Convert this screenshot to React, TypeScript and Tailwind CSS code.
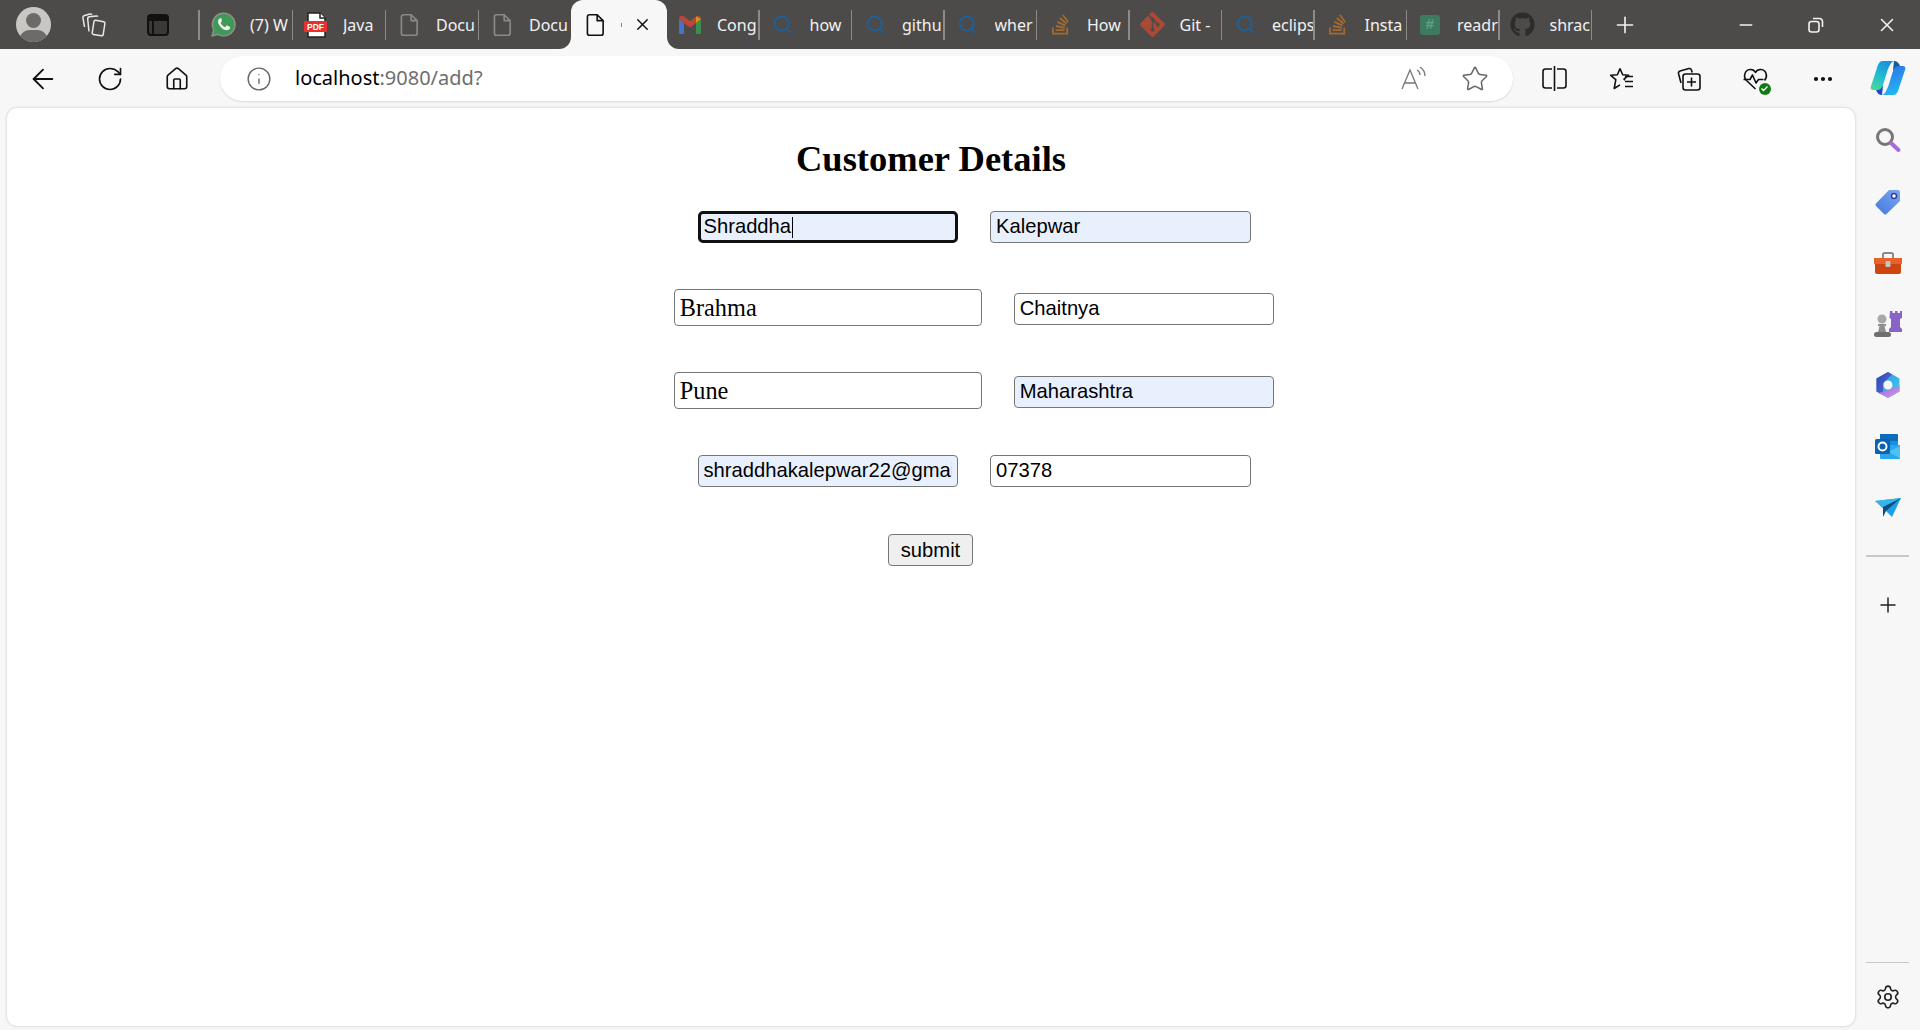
import React from "react";
import { FaStackOverflow, FaGithub } from "react-icons/fa";
import { SiGit } from "react-icons/si";
import { ArrowLeft, RotateCw, Home, Info, Star, Plus, X, Minus, Search, Settings, Ellipsis } from "lucide-react";

const FileIcon = ({ color, size = 24 }: { color: string; size?: number }) => (
  <svg width={size} height={size} viewBox="0 0 24 24" fill="none" stroke={color} strokeWidth="1.5" strokeLinejoin="round">
    <path d="M7 2.5h7l5.5 5.5v11.5a2 2 0 0 1-2 2H7a2 2 0 0 1-2-2v-15a2 2 0 0 1 2-2Z" />
    <path d="M14 2.5V8h5.5" />
  </svg>
);

const PdfIcon = () => (
  <svg width="26" height="26" viewBox="0 0 26 26">
    <path d="M5 1h12l5 5v19H5Z" fill="#fff" stroke="#222" strokeWidth="1.5" />
    <path d="M17 1v5h5" fill="#fff" stroke="#222" strokeWidth="1.5" />
    <rect x="1" y="9" width="23" height="11" fill="#e5322d" />
    <text x="12.5" y="18" textAnchor="middle" fontSize="8.5" fontWeight="700" fill="#fff" fontFamily="Liberation Sans, sans-serif">PDF</text>
  </svg>
);

const WhatsApp = () => (
  <svg width="25" height="25" viewBox="0 0 25 25">
    <path d="M1 24l1.700-6.200A11.300 11.300 0 1 1 7 22.300Z" fill="#3f9a58" stroke="#8a918b" strokeWidth="1.500" strokeLinejoin="round" />
    <path d="M8.800 6.500c-.8.300-1.800 1.500-1.800 3 0 3.500 4.800 8.800 8.800 8.800 1.500 0 2.900-1 3.200-2 .2-.6.200-1.200.1-1.400l-2.900-1.500c-.3-.1-.5 0-.7.200l-1 1.300c-.2.200-.4.200-.7.100-1.700-.7-3.100-2-4-3.800-.1-.3-.1-.5.100-.7l.8-1c.2-.2.200-.4.100-.7L10.500 6.600c-.3-.5-1-.3-1.700-.1Z" fill="#f0f0f0" />
  </svg>
);

const GmailIcon = () => (
  <svg width="24" height="24" viewBox="0 0 24 24" opacity="0.72">
    <path d="M1 6v14a1 1 0 0 0 1 1h4V10Z" fill="#4285f4" />
    <path d="M23 6v14a1 1 0 0 1-1 1h-4V10Z" fill="#34a853" />
    <path d="M1 6c0-3 3-4 5-2.5L12 8l6-4.500C20 2 23 3 23 6l-5 4-6 4.500L6 10Z" fill="#ea4335" />
    <path d="M18 3.500 23 6l-5 4Z" fill="#fbbc04" />
  </svg>
);

const HashIcon = () => (
  <div className="w-[20px] h-[20px] rounded-[3px] bg-[#3d7a5f] flex items-center justify-center text-[#5ea584] text-[15px] font-bold font-['Liberation_Sans',sans-serif]">#</div>
);

const searchIcon = <Search size={21} color="#225e92" strokeWidth={2.4} />;

const tabs: { icon: React.ReactNode; label: string }[] = [
  { icon: <WhatsApp />, label: "(7) W" },
  { icon: <PdfIcon />, label: "Java" },
  { icon: <FileIcon color="#8a8a88" size={26} />, label: "Docu" },
  { icon: <FileIcon color="#8a8a88" size={26} />, label: "Docu" },
  { icon: null, label: "" },
  { icon: <GmailIcon />, label: "Cong" },
  { icon: searchIcon, label: "how" },
  { icon: searchIcon, label: "githu" },
  { icon: searchIcon, label: "wher" },
  { icon: <FaStackOverflow size={23} color="#a5682f" />, label: "How" },
  { icon: <SiGit size={25} color="#a84a35" />, label: "Git -" },
  { icon: searchIcon, label: "eclips" },
  { icon: <FaStackOverflow size={23} color="#a5682f" />, label: "Insta" },
  { icon: <HashIcon />, label: "readr" },
  { icon: <FaGithub size={25} color="#2c2c2c" />, label: "shrac" },
];

const Tab = ({ icon, label, after }: { icon: React.ReactNode; label: string; after: boolean }) => (
  <div className={`relative ${after ? "w-[92.5px]" : "w-[93px]"} h-[49px] shrink-0 flex items-center`}>
    <div className="w-[44px] ml-[1px] flex justify-center shrink-0">{icon}</div>
    <div className="ml-[5px] w-[42px] overflow-hidden whitespace-nowrap text-[16px] text-[#f2f2f2] font-['Noto_Sans',sans-serif]">{label}</div>
    <div className="absolute right-0 top-[10px] h-[30px] w-[1.5px] bg-[#8c8b89]" />
  </div>
);

const ActiveTab = () => (
  <div className="relative w-[96px] h-[49px] shrink-0 bg-[#f7f7f7] rounded-t-[12px] flex items-center -ml-[1px]">
    <div className="absolute -left-[12px] bottom-0 w-[12px] h-[12px] bg-[#f7f7f7]">
      <div className="w-full h-full bg-[#4d4b49] rounded-br-[12px]" />
    </div>
    <div className="absolute -right-[12px] bottom-0 w-[12px] h-[12px] bg-[#f7f7f7] z-10">
      <div className="w-full h-full bg-[#4d4b49] rounded-bl-[12px]" />
    </div>
    <div className="ml-[11px]"><FileIcon color="#111" size={26} /></div>
    <div className="ml-[13px] w-[1px] h-[4px] bg-[#888]" />
    <X size={19} color="#111" strokeWidth={1.8} className="ml-[11px]" />
  </div>
);

const Split = () => (
  <svg width="27" height="27" viewBox="0 0 27 27" fill="none" stroke="#111" strokeWidth="1.6">
    <path d="M11 4H4.500a2.500 2.500 0 0 0-2.500 2.500v14a2.500 2.500 0 0 0 2.500 2.500H11M16 4h6.500a2.500 2.500 0 0 1 2.500 2.500v14a2.500 2.500 0 0 1-2.500 2.500H16M13.500 1v25" />
  </svg>
);
const FavList = () => (
  <svg width="28" height="28" viewBox="0 0 28 28" fill="none" stroke="#111" strokeWidth="1.6" strokeLinejoin="round">
    <path d="M12 3.500l2.700 6.200 6 .5-4.700 4 1 1M12 3.500 9.400 9.700l-6.700.6 5.100 4.400-1.600 8.800 5.800-3.600" />
    <path d="M17 11.500h8M17 16.500h8M17 21.500h8" />
  </svg>
);
const Collections = () => (
  <svg width="28" height="28" viewBox="0 0 28 28" fill="none" stroke="#111" strokeWidth="1.6" strokeLinejoin="round">
    <path d="M6 18 3.500 8.500a2 2 0 0 1 1.500-2.400l9-2.500a2 2 0 0 1 2.400 1.300l.8 2.600" />
    <rect x="8" y="9" width="17" height="16" rx="2.500" />
    <path d="M16.500 12.500v9M12 17h9" />
  </svg>
);
const Health = () => (
  <div className="relative w-[28px] h-[28px]">
    <svg width="28" height="28" viewBox="0 0 28 28" fill="none" stroke="#111" strokeWidth="1.6" strokeLinejoin="round">
      <path d="M13.500 24 4.500 15.500C1 12 2.500 5 8 4.500c2.500-.2 4.500 1 5.500 3 1-2 3-3.200 5.500-3 5.500.5 7 7 3.500 11" />
      <path d="M1.500 14.500h6.500l2.500-4.500 3.500 8 2.500-3.500h5" />
    </svg>
    <div className="absolute right-[-1px] bottom-[-2px] w-[12px] h-[12px] rounded-full bg-[#107c10] flex items-center justify-center">
      <svg width="9" height="9" viewBox="0 0 9 9" fill="none" stroke="#fff" strokeWidth="1.400"><path d="M1.500 4.500 3.500 6.500 7.500 2.500" /></svg>
    </div>
  </div>
);
const Copilot = () => (
  <svg width="36" height="36" viewBox="0 0 36 36" className="-mt-[2px]">
    <defs>
      <linearGradient id="cpa" x1="0.7" y1="0" x2="0.2" y2="1"><stop offset="0" stopColor="#1a8fe0" /><stop offset="0.55" stopColor="#22bdd0" /><stop offset="1" stopColor="#4ad89a" /></linearGradient>
      <linearGradient id="cpb" x1="0.3" y1="0" x2="0.6" y2="1"><stop offset="0" stopColor="#2f74e6" /><stop offset="1" stopColor="#22b8f2" /></linearGradient>
    </defs>
    <path d="M24 1c3 0 5 2 6 5l1 4h-8Z" fill="#0f5f9c" />
    <path d="M12 35c-3 0-5-2-6-5l-1-4h8Z" fill="#1d49c9" />
    <path d="M12 1H24C21 2 19 6 17 12L13 25C12 28 10 30 7 30H3C1 30 0 28 1 26L7 8C8 4 10 1 12 1Z" fill="url(#cpa)" />
    <path d="M24 35H12C15 34 17 30 19 24L23 11C24 8 26 6 29 6H33C35 6 36 8 35 10L29 28C28 32 26 35 24 35Z" fill="url(#cpb)" />
  </svg>
);

const SideSearch = () => (
  <svg width="28" height="28" viewBox="0 0 28 28" fill="none">
    <circle cx="11" cy="11" r="7.500" stroke="#767676" strokeWidth="3" />
    <path d="M17 17l7.500 7" stroke="#a86bd6" strokeWidth="4" strokeLinecap="round" />
  </svg>
);
const SideTag = () => (
  <svg width="28" height="28" viewBox="0 0 28 28">
    <defs><linearGradient id="tg" x1="1" y1="0" x2="0" y2="1"><stop offset="0" stopColor="#7fa8ee" /><stop offset="1" stopColor="#3f78e0" /></linearGradient></defs>
    <path d="M15 2h9a2 2 0 0 1 2 2v9L12.500 26a2 2 0 0 1-2.500 0L2 18a2 2 0 0 1 0-2.500Z" fill="url(#tg)" />
    <circle cx="20" cy="8" r="2.500" fill="#fff" stroke="#2f3fa0" strokeWidth="1.500" />
  </svg>
);
const SideBox = () => (
  <svg width="28" height="28" viewBox="0 0 28 28">
    <path d="M9 10V5.500A1.500 1.500 0 0 1 10.500 4h7A1.500 1.500 0 0 1 19 5.500V10" fill="none" stroke="#8a8a8a" strokeWidth="2" />
    <path d="M0 9h28v6H0Z" fill="#e8622a" />
    <path d="M1 15h26v8a2 2 0 0 1-2 2H3a2 2 0 0 1-2-2Z" fill="#cf4510" />
    <rect x="11.500" y="12" width="5" height="6" rx="1" fill="#c4c4c4" />
  </svg>
);
const SideChess = () => (
  <svg width="30" height="30" viewBox="0 0 30 30">
    <path d="M17 2h2.500v2H22V2h2.500v2H27V2h2v7l-2 1v8l2 2v3H16v-3l2-2v-8l-1.500-1Z" fill="#8a63c9" />
    <circle cx="9" cy="10" r="4.500" fill="#a8a8a8" />
    <path d="M5 15h8v2h-1.500l1.500 6H5l1.500-6H5Z" fill="#8e8e8e" />
    <rect x="1" y="23" width="17" height="5" rx="2.500" fill="#6f6f6f" />
  </svg>
);
const SideM365 = () => (
  <svg width="28" height="28" viewBox="0 0 28 28">
    <defs>
      <linearGradient id="m1" x1="0" y1="0" x2="1" y2="1"><stop offset="0" stopColor="#1e4fb0" /><stop offset="1" stopColor="#7a5ee0" /></linearGradient>
      <linearGradient id="m2" x1="0" y1="0" x2="1" y2="1"><stop offset="0" stopColor="#9a68dc" /><stop offset="1" stopColor="#d29ae8" /></linearGradient>
      <linearGradient id="m3" x1="0" y1="0" x2="1" y2="1"><stop offset="0" stopColor="#2d8fe0" /><stop offset="1" stopColor="#45d0ee" /></linearGradient>
    </defs>
    <path d="M14 1 25.500 7.500V20.500L14 27 2.500 20.500V7.500Z" fill="url(#m3)" />
    <path d="M14 1 2.500 7.500V20.500L9 24 9 12 18 3.500Z" fill="url(#m1)" />
    <path d="M25.500 20.500 14 27 5 22 14 19 25.500 15Z" fill="url(#m2)" />
    <circle cx="14" cy="14" r="4.500" fill="#f7f7f7" />
  </svg>
);
const SideOutlook = () => (
  <svg width="28" height="28" viewBox="0 0 28 28">
    <path d="M6 1h17a1 1 0 0 1 1 1v6l-9 6-9-6Z" fill="#0f6cbd" />
    <path d="M6 8h18v6H6Z" fill="#1490df" />
    <path d="M6 12h20v13a1 1 0 0 1-1 1H7a1 1 0 0 1-1-1Z" fill="#28a8ea" />
    <path d="M26 13v12L14 19Z" fill="#50c0f0" />
    <rect x="1" y="6" width="15" height="15" rx="1.500" fill="#0b62b0" />
    <circle cx="8.500" cy="13.500" r="4" fill="none" stroke="#fff" strokeWidth="2" />
  </svg>
);
const SidePlane = () => (
  <svg width="28" height="28" viewBox="0 0 28 28">
    <path d="M1 8 27 5l-9 19-6-6Z" fill="#1ea0e8" />
    <path d="M1 8 27 5 9 14Z" fill="#35b4f0" />
    <path d="M9 14 27 5 12 18l-3 6Z" fill="#0f4f80" />
  </svg>
);

const sans = "h-[32px] w-[260.5px] text-[20.2px] pb-[1px] font-['Liberation_Sans',sans-serif]";
const serif = "h-[37px] w-[308px] text-[24.3px] font-['Liberation_Serif',serif]";

const Field = ({ value, big, fill, focus, raised }: { value: string; big?: boolean; fill?: boolean; focus?: boolean; raised?: boolean }) => {
  const cls = [
    "text-black outline-none",
    big ? serif : sans,
    fill ? "bg-[#e8f0fe]" : "bg-white",
    raised ? "mb-[1.5px]" : "",
    focus ? "border-[3px] border-[#101010] rounded-[5px] pl-[3px] pr-[3px]" : "border-[1.5px] border-[#767676] rounded-[4px] pl-[5px] pr-[5px]",
  ].join(" ");
  if (focus) {
    return (
      <div className="relative flex">
        <input readOnly value={value} className={cls} />
        <div className="absolute left-[94px] top-[6px] w-[1px] h-[21px] bg-black" />
      </div>
    );
  }
  return <input readOnly value={value} className={cls} />;
};

const IconSlot = ({ w, children }: { w: string; children: React.ReactNode }) => (
  <div className={`${w} shrink-0 flex items-center justify-center`}>{children}</div>
);

const rowCls = "flex items-end gap-[32px] pl-[86px]";

export default function App() {
  return (
    <div className="w-[1920px] h-[1030px] overflow-hidden flex flex-col bg-[#f7f7f7] font-['Noto_Sans',sans-serif]">
      <div className="h-[49px] shrink-0 bg-[#4d4b49] flex items-center">
        <IconSlot w="w-[66px]">
          <div className="w-[35px] h-[35px] rounded-full bg-[#c9c7c4] relative overflow-hidden">
            <div className="absolute left-[10px] top-[6px] w-[15px] h-[15px] rounded-full bg-[#6d6b69]" />
            <div className="absolute left-[3px] top-[23px] w-[29px] h-[22px] rounded-full bg-[#6d6b69]" />
          </div>
        </IconSlot>
        <IconSlot w="w-[56px]">
          <svg width="26" height="26" viewBox="0 0 26 26" fill="none" stroke="#e8e8e8" strokeWidth="1.500" strokeLinejoin="round">
            <path d="M13 9.500a1.500 1.500 0 0 1 1.700-1.200l8 1.500a1.500 1.500 0 0 1 1.200 1.700l-1.700 11a1.500 1.500 0 0 1-1.700 1.200l-8-1.300a1.500 1.500 0 0 1-1.300-1.700Z" />
            <path d="M8 19.500 6.700 7a2 2 0 0 1 1.600-2.200l7-.9a2 2 0 0 1 1.700.7" />
            <path d="M3.500 15 2 6A2 2 0 0 1 3.500 3.500L9 2a2 2 0 0 1 2 .7" />
          </svg>
        </IconSlot>
        <IconSlot w="w-[72px]">
          <svg width="24" height="24" viewBox="0 0 24 24" fill="none">
            <rect x="2" y="2" width="20" height="20" rx="3" fill="#3a3937" stroke="#111" strokeWidth="2" />
            <path d="M2 8h20V5a3 3 0 0 0-3-3H5a3 3 0 0 0-3 3Z" fill="#111" />
            <path d="M7 8v14" stroke="#111" strokeWidth="2" />
          </svg>
        </IconSlot>
        <div className="w-[4px] shrink-0" />
        <div className="w-[2px] h-[30px] bg-[#8c8b89] shrink-0" />
        <div className="flex items-center">
          {tabs.map((t, i) => (i === 4 ? <ActiveTab key={i} /> : <Tab key={i} icon={t.icon} label={t.label} after={i > 4} />))}
        </div>
        <IconSlot w="w-[66px]"><Plus size={26} color="#f2f2f2" strokeWidth={1.5} /></IconSlot>
        <div className="flex-1" />
        <IconSlot w="w-[64px]"><Minus size={20} color="#f2f2f2" strokeWidth={1.600} /></IconSlot>
        <IconSlot w="w-[76px]">
          <svg width="18" height="18" viewBox="0 0 18 18" fill="none" stroke="#f2f2f2" strokeWidth="1.600">
            <rect x="2" y="5.500" width="10" height="10.500" rx="2.500" />
            <path d="M6 2.500h6.500A3 3 0 0 1 15.500 5.500V11" />
          </svg>
        </IconSlot>
        <IconSlot w="w-[66px]"><X size={22} color="#f2f2f2" strokeWidth={1.700} /></IconSlot>
      </div>

      <div className="h-[59px] shrink-0 flex items-center">
        <IconSlot w="w-[86px]"><ArrowLeft size={32} color="#111" strokeWidth={1.400} /></IconSlot>
        <IconSlot w="w-[48px]"><RotateCw size={28} color="#111" strokeWidth={1.400} /></IconSlot>
        <IconSlot w="w-[86px]"><Home size={26} color="#111" strokeWidth={1.500} /></IconSlot>
        <div className="w-[1293px] h-[45px] shrink-0 bg-white rounded-full shadow-[0_1px_2px_rgba(0,0,0,0.12)] flex items-center">
          <Info size={26} color="#666" strokeWidth={1.300} className="ml-[26px]" />
          <div className="ml-[23px] -mt-[2px] text-[20px] text-black">localhost<span className="text-[#6e6e6e]">:9080/add?</span></div>
          <div className="flex-1" />
          <svg width="28" height="28" viewBox="0 0 28 28" fill="none" stroke="#777" strokeWidth="1.300" className="mr-[33px]">
            <path d="M2 24 10 5l8 19M5 18h10" />
            <path d="M17 5c2 1 3 3 3 5M20 2c3 2 5 5 5 9" />
          </svg>
          <Star size={28} color="#666" strokeWidth={1.300} className="mr-[24px]" />
        </div>
        <div className="w-[8px] shrink-0" />
        <IconSlot w="w-[67px]"><Split /></IconSlot>
        <IconSlot w="w-[67px]"><FavList /></IconSlot>
        <IconSlot w="w-[67px]"><Collections /></IconSlot>
        <IconSlot w="w-[67px]"><Health /></IconSlot>
        <IconSlot w="w-[67px]"><Ellipsis size={24} color="#111" strokeWidth={2.200} /></IconSlot>
        <IconSlot w="w-[63px]"><Copilot /></IconSlot>
      </div>

      <div className="flex-1 flex min-h-0 pb-[4px]">
        <div className="ml-[7px] w-[1848px] shrink-0 bg-white rounded-[10px] shadow-[0_0_3px_rgba(0,0,0,0.22)] flex flex-col items-center">
          <h2 className="mt-[30px] text-[36.5px] leading-[42px] font-bold text-black font-['Liberation_Serif',serif]">Customer Details</h2>
          <div className="mt-[31px] flex flex-col items-center gap-[46px]">
            <div className={rowCls}>
              <Field value="Shraddha" fill focus />
              <Field value="Kalepwar" fill />
            </div>
            <div className={rowCls}>
              <Field value="Brahma" big />
              <Field value="Chaitnya" raised />
            </div>
            <div className={rowCls}>
              <Field value="Pune" big />
              <Field value="Maharashtra" fill raised />
            </div>
            <div className={rowCls}>
              <Field value="shraddhakalepwar22@gmail.com" fill />
              <Field value="07378" />
            </div>
            <button className="w-[85px] h-[32px] -ml-[1px] mt-[1px] rounded-[4px] border-[1.5px] border-[#767676] bg-[#efefef] text-[20.2px] text-black font-['Liberation_Sans',sans-serif]">submit</button>
          </div>
        </div>
        <div className="flex-1 flex flex-col items-center">
          <div className="h-[32px] w-full shrink-0 flex items-center justify-center mt-[16px]"><SideSearch /></div>
          <div className="mt-[30px] h-[32px] flex items-center"><SideTag /></div>
          <div className="mt-[29px] h-[32px] flex items-center"><SideBox /></div>
          <div className="mt-[29px] h-[32px] flex items-center"><SideChess /></div>
          <div className="mt-[29px] h-[32px] flex items-center"><SideM365 /></div>
          <div className="mt-[30px] h-[32px] flex items-center"><SideOutlook /></div>
          <div className="mt-[28px] h-[32px] flex items-center"><SidePlane /></div>
          <div className="mt-[32px] w-[43px] h-[1.500px] bg-[#c8c8c8]" />
          <div className="mt-[36px] h-[24px] flex items-center"><Plus size={24} color="#222" strokeWidth={1.500} /></div>
          <div className="flex-1" />
          <div className="w-[43px] h-[1.500px] bg-[#c8c8c8]" />
          <div className="mt-[20px] mb-[15px] h-[28px] flex items-center"><Settings size={26} color="#222" strokeWidth={1.500} /></div>
        </div>
      </div>
    </div>
  );
}
